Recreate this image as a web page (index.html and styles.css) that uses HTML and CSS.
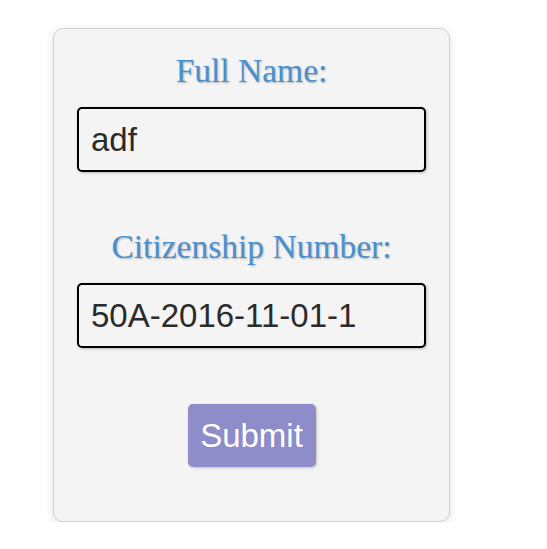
FILE: index.html
```html
<!DOCTYPE html>
<html>
<head>
<meta charset="utf-8">
<link rel="stylesheet" href="styles.css">
</head>
<body>
<form class="card">
  <div class="group">
    <label class="label" for="name">Full Name:</label>
    <input class="field" id="name" type="text" value="adf">
  </div>
  <div class="group">
    <label class="label" for="cit">Citizenship Number:</label>
    <input class="field" id="cit" type="text" value="50A-2016-11-01-1">
  </div>
  <button class="submit" type="button">Submit</button>
</form>
</body>
</html>
```
FILE: styles.css
```css
html, body {
  margin: 0;
  padding: 0;
  background: #ffffff;
}
body {
  padding: 28px 0 0 53px;
}
.card {
  box-sizing: border-box;
  width: 397px;
  margin: 0;
  padding: 23px 23px 54px;
  background: #f4f4f4;
  border: 1px solid #d0d0d0;
  border-radius: 10px;
  box-shadow: 0 2px 10px rgba(0, 0, 0, 0.12);
  display: flex;
  flex-direction: column;
  align-items: center;
}
.group {
  display: flex;
  flex-direction: column;
  align-items: center;
  width: 100%;
  margin-bottom: 56px;
}
.label {
  font-family: "Liberation Serif", "Times New Roman", serif;
  font-size: 33.5px;
  line-height: 38px;
  color: #4a8fd0;
  text-shadow: 1px 1px 2px rgba(0, 0, 0, 0.25);
  margin-bottom: 17px;
}
.field {
  box-sizing: border-box;
  width: 349px;
  height: 65px;
  margin: 0;
  padding: 0 12px;
  font-family: "Liberation Sans", Arial, sans-serif;
  font-size: 33px;
  color: #2b2b2b;
  background: #f4f4f4;
  border: 2px solid #000000;
  border-radius: 5px;
  box-shadow: 1px 1px 3px rgba(0, 0, 0, 0.25);
  outline: none;
}
.submit {
  box-sizing: border-box;
  height: 63px;
  width: 128px;
  margin: 0;
  padding: 0;
  font-family: "Liberation Sans", Arial, sans-serif;
  font-size: 33px;
  color: #ffffff;
  background: #8e8cc9;
  border: none;
  border-radius: 5px;
  box-shadow: 1px 1px 3px rgba(0, 0, 0, 0.2);
}
```
